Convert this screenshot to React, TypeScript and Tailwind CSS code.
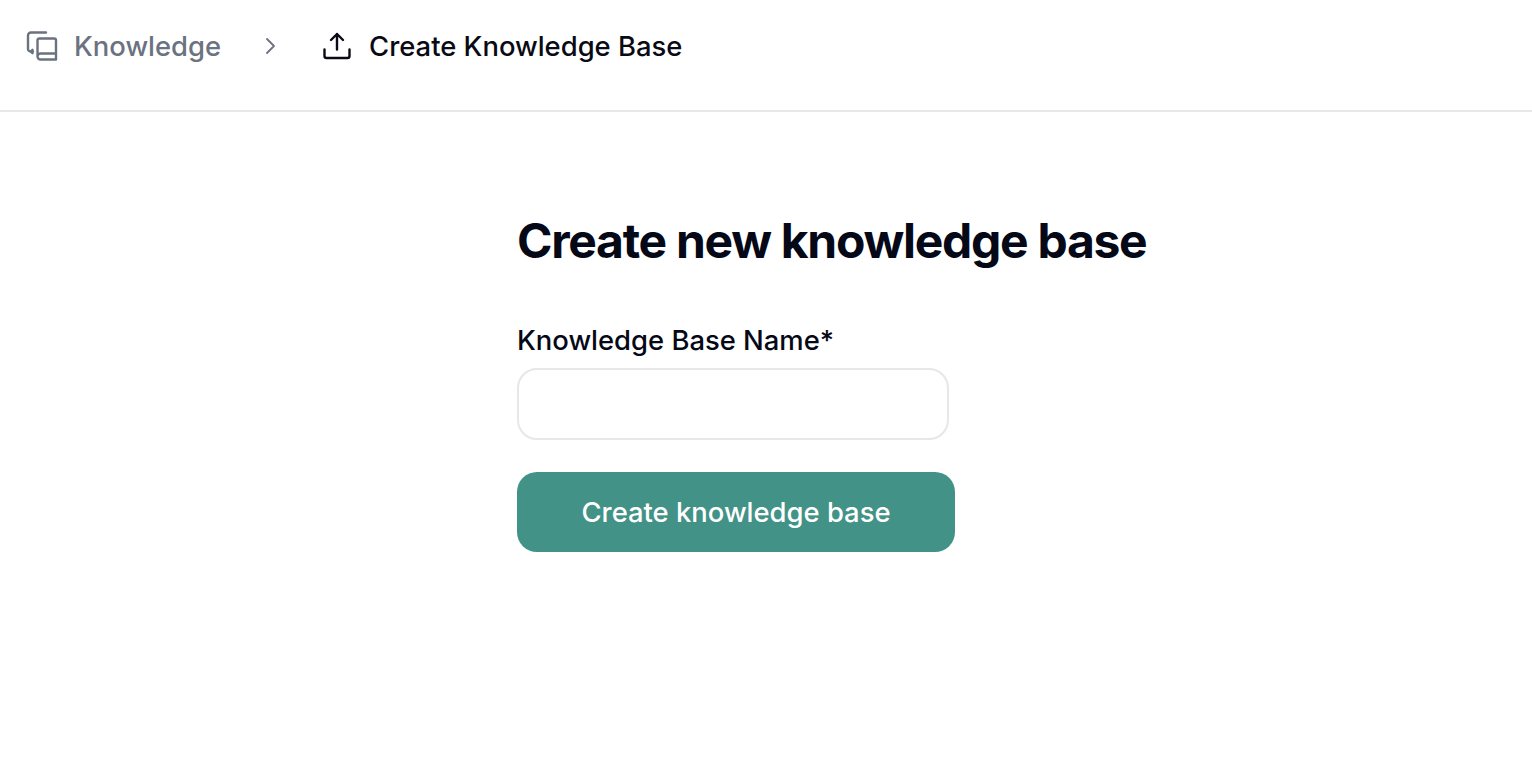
export default function App() {
  return (
    <div className="min-h-screen bg-white font-['Inter',sans-serif]">
      <header className="flex h-[112px] items-start border-b-2 border-[#e5e7eb] pl-[26px] pt-[30px]">
        <nav className="flex h-[32px] items-center text-[27.4px] font-medium leading-[34px]">
          <svg width="32" height="32" viewBox="0 0 32 32" fill="none" stroke="#6b7280" strokeWidth="2.4" strokeLinecap="round" strokeLinejoin="round">
            <path d="M20 2.500H5a3 3 0 0 0-3 3v13.500a2.500 2.500 0 0 0 2.500 2.500H7" />
            <path d="M6.500 19.800l-1.800 1.700 1.800 1.700" />
            <path d="M11.500 26.500V10.500a2 2 0 0 1 2-2h14.500a2 2 0 0 1 2 2v19H14.500a3 3 0 0 1 0-6H30" />
          </svg>
          <span className="ml-[16px] text-[#6b7280]">Knowledge</span>
          <svg className="ml-[37px]" width="24" height="24" viewBox="0 0 24 24" fill="none" stroke="#6b7280" strokeWidth="1.8" strokeLinecap="round" strokeLinejoin="round">
            <path d="M9 5l7 7-7 7" />
          </svg>
          <svg className="ml-[39px]" width="32" height="32" viewBox="0 0 32 32" fill="none" stroke="#0a0a14" strokeWidth="2.4" strokeLinecap="round" strokeLinejoin="round">
            <path d="M3.500 19.500v6.500a2 2 0 0 0 2 2h21a2 2 0 0 0 2-2v-6.500" />
            <path d="M16 19.500V4M10 10l6-6 6 6" />
          </svg>
          <span className="ml-[16px] text-[#0a0a14]">Create Knowledge Base</span>
        </nav>
      </header>
      <main className="pl-[517px] pt-[99px]">
        <h1 className="text-[48px] font-bold leading-[60px] tracking-[-1.28px] text-[#050816]">Create new knowledge base</h1>
        <label className="mt-[51px] block text-[27.4px] font-medium leading-[36px] text-[#050816]">Knowledge Base Name*</label>
        <input type="text" className="mt-[10px] block h-[72px] w-[432px] rounded-[20px] border-2 border-[#e5e7eb] bg-white outline-none" />
        <button className="mt-[32px] block h-[80px] w-[438px] rounded-[20px] bg-[#429287] pt-[2px] text-[27.4px] font-medium text-white">Create knowledge base</button>
      </main>
    </div>
  );
}
